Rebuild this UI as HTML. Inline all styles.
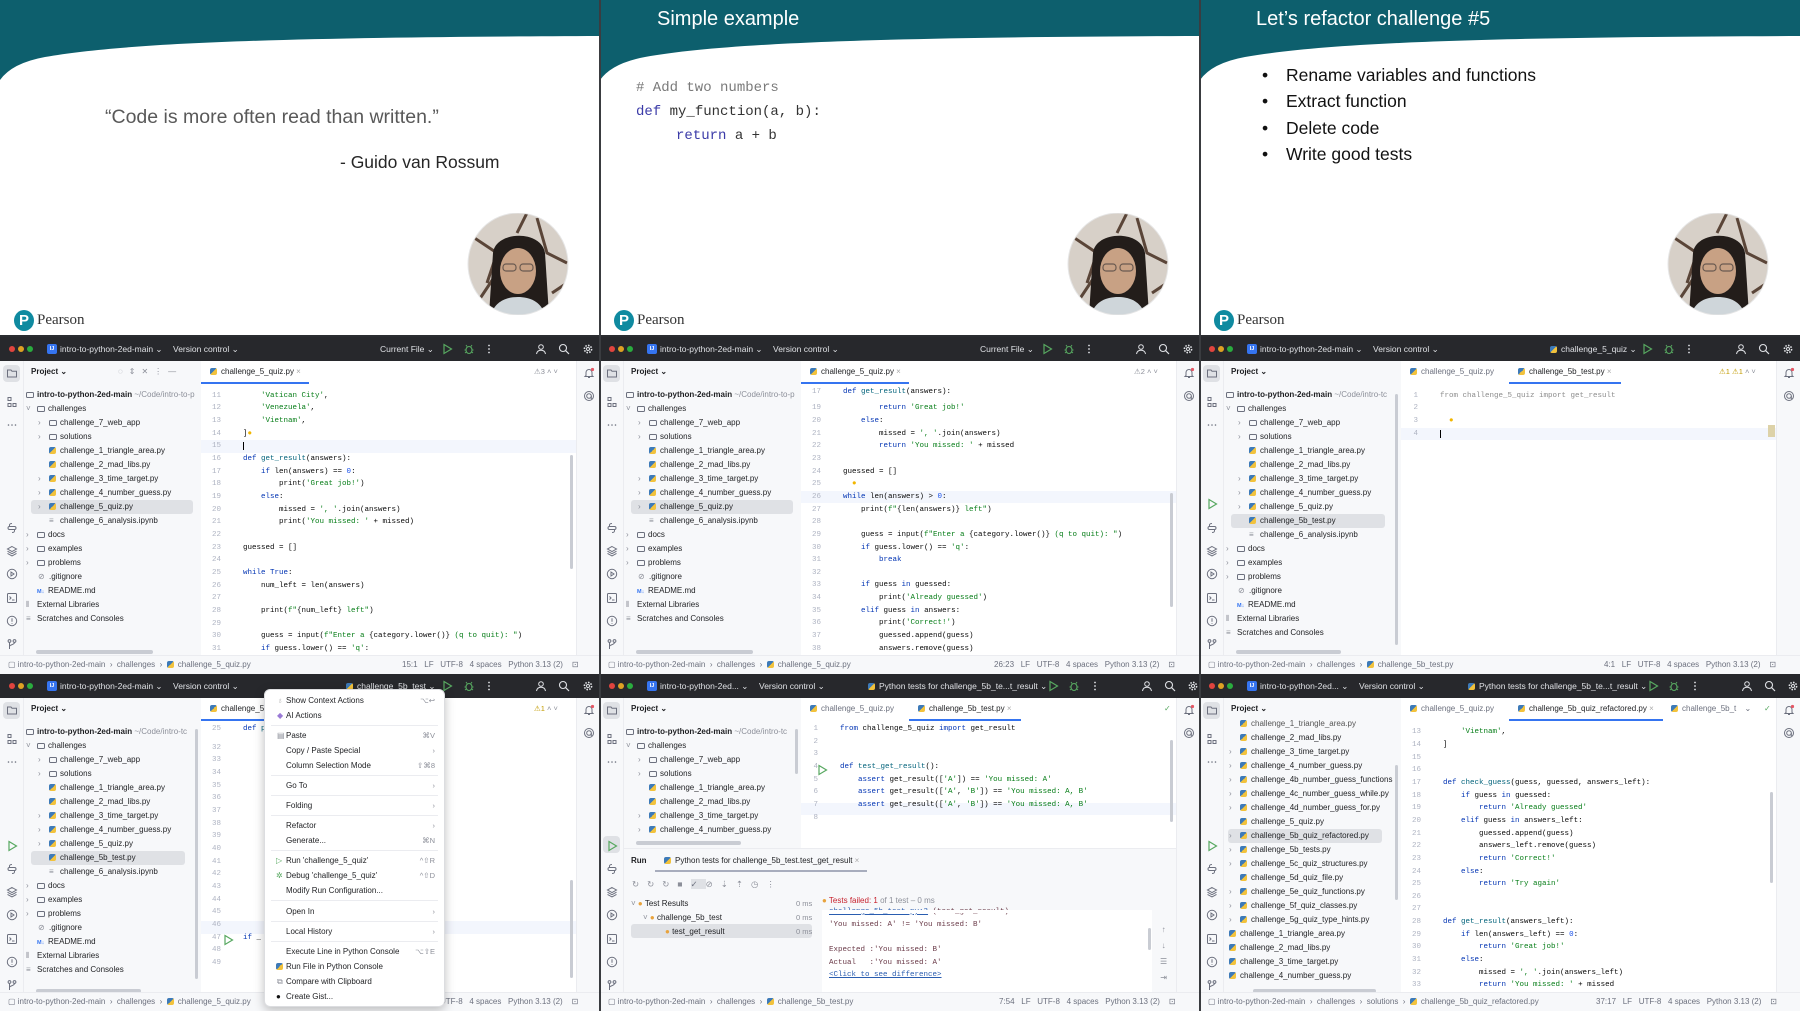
<!DOCTYPE html>
<html><head><meta charset="utf-8"><style>
*{margin:0;padding:0;box-sizing:border-box}
body{width:1800px;height:1011px;overflow:hidden;background:#1e1f22;position:relative;font-family:"Liberation Sans",sans-serif}
.cell{position:absolute;width:600px;height:337px;overflow:hidden;background:#f7f8fa}
.slide{background:#fff}
.a{position:absolute;white-space:nowrap}
.tb{position:absolute;left:0;top:0;width:600px;height:24px;background:#27282c}
.tt{color:#dfe1e5;font-size:8.5px;top:7px;line-height:10px}
.dot{position:absolute;top:9px;width:6px;height:6px;border-radius:50%}
.ij{position:absolute;left:47px;top:7px;width:10px;height:10px;background:#3574f0;border-radius:2px;color:#fff;font-size:5.5px;line-height:10px;text-align:center;font-weight:bold}
.ic{position:absolute;width:12px;height:12px}
.ed{position:absolute;left:201px;top:24px;width:375px;height:294px;background:#fff}
.tree{position:absolute;left:0;top:51px;font-size:8px;color:#1e1f22}
.tree div{height:14px;line-height:14px;white-space:nowrap}
.ch{display:inline-block;width:11px;color:#8c8f99;font-size:8px}
.fo{display:inline-block;width:8px;height:6px;border:1px solid #6c707e;border-radius:1.5px;margin-right:3px;vertical-align:-0.5px}
.py{display:inline-block;width:7px;height:7px;border-radius:2px;background:linear-gradient(135deg,#3d7ab8 50%,#f2c23c 50%);margin-right:4px;vertical-align:-0.5px}
.nb{display:inline-block;width:11px;color:#8c8f99}
.md{display:inline-block;width:11px;color:#3574f0;font-size:5.5px;font-weight:bold}
.sel{position:absolute;left:31px;height:14px;background:#dfe1e5;border-radius:3px}
.code{position:absolute;left:201px;font:7.5px "Liberation Mono",monospace;color:#080808}
.code div{height:12.67px;line-height:12.67px;white-space:pre}
.code b{font-weight:normal;display:inline-block;width:20px;text-align:right;margin-right:22px;color:#aeb3c2}
.k{color:#0033b3}.f{color:#00627a}.s{color:#067d17}.n{color:#1750eb}.g{color:#8c8c8c}
.cur{position:absolute;left:201px;width:375px;height:12.67px;background:#f3f6fd}
.st{position:absolute;left:0;top:318px;width:600px;height:19px;border-top:1px solid #ebecf0;background:#f7f8fa;font-size:8px;color:#6c707e;line-height:18px}
.ph{position:absolute;left:31px;top:30px;font-size:8px;font-weight:bold;color:#1e1f22}
.tab{position:absolute;top:30px;font-size:8px;color:#1e1f22;white-space:nowrap}
.ul{position:absolute;top:45px;height:2px;background:#3574f0}
.vs{position:absolute;width:3px;background:#c9ccd3;border-radius:2px}
.hs{position:absolute;height:4px;background:#c9ccd3;border-radius:2px}
.lst{position:absolute;left:0;top:24px;width:24px;height:294px;border-right:1px solid #ebecf0}
.rst{position:absolute;left:576px;top:24px;width:24px;height:294px;border-left:1px solid #ebecf0}
.menu{position:absolute;left:264px;top:15px;width:181px;height:318px;background:#fff;border:1px solid #dcdde0;border-radius:6px;box-shadow:0 3px 10px rgba(0,0,0,.25);font-size:8px;color:#1e1f22}
.menu div{position:absolute;left:21px;white-space:nowrap;line-height:10px}
.menu i{position:absolute;right:9px;font-style:normal;color:#8c8f99;white-space:nowrap;line-height:10px;font-size:7.5px}
.menu hr{position:absolute;left:6px;right:6px;border:0;border-top:1px solid #ebecf0}
.con{font:7.5px "Liberation Mono",monospace;color:#6a3a48}
</style></head><body>
<svg width="0" height="0" style="position:absolute">
<defs>
<symbol id="play" viewBox="0 0 12 12"><path d="M3 1.5L10.5 6L3 10.5Z" fill="none" stroke="#57a860" stroke-width="1.2"/></symbol>
<symbol id="bug" viewBox="0 0 12 12"><ellipse cx="6" cy="7" rx="3" ry="3.5" fill="none" stroke="#57a860" stroke-width="1.1"/><path d="M4 3.5L3 2M8 3.5L9 2M1.5 7H3M9 7H10.5M2 10L3.3 9M10 10L8.7 9" stroke="#57a860" stroke-width="1"/></symbol>
<symbol id="more" viewBox="0 0 12 12"><circle cx="6" cy="2.5" r="0.9" fill="#dfe1e5"/><circle cx="6" cy="6" r="0.9" fill="#dfe1e5"/><circle cx="6" cy="9.5" r="0.9" fill="#dfe1e5"/></symbol>
<symbol id="user" viewBox="0 0 12 12"><circle cx="6" cy="4" r="2.3" fill="none" stroke="#dfe1e5"/><path d="M1.5 11C2 8 4 7.3 6 7.3S10 8 10.5 11" fill="none" stroke="#dfe1e5"/></symbol>
<symbol id="srch" viewBox="0 0 12 12"><circle cx="5" cy="5" r="3.5" fill="none" stroke="#dfe1e5" stroke-width="1.1"/><path d="M7.6 7.6L11 11" stroke="#dfe1e5" stroke-width="1.2"/></symbol>
<symbol id="gear" viewBox="0 0 12 12"><circle cx="6" cy="6" r="3.6" fill="none" stroke="#dfe1e5" stroke-width="1.6" stroke-dasharray="1.6 1.2"/><circle cx="6" cy="6" r="1.5" fill="none" stroke="#dfe1e5"/></symbol>
<symbol id="fold" viewBox="0 0 12 12"><path d="M1.5 3H5L6 4.2H10.5V10H1.5Z" fill="none" stroke="#6c707e"/></symbol>
<symbol id="strc" viewBox="0 0 12 12"><rect x="2" y="1.5" width="3" height="3" fill="none" stroke="#6c707e"/><rect x="2" y="7.5" width="3" height="3" fill="none" stroke="#6c707e"/><rect x="7" y="7.5" width="3" height="3" fill="none" stroke="#6c707e"/></symbol>
<symbol id="dts" viewBox="0 0 12 12"><circle cx="2.5" cy="6" r="0.8" fill="#6c707e"/><circle cx="6" cy="6" r="0.8" fill="#6c707e"/><circle cx="9.5" cy="6" r="0.8" fill="#6c707e"/></symbol>
<symbol id="pyc" viewBox="0 0 12 12"><path d="M6 1.5C3 1.5 3.5 3 3.5 4.5H6.5M6 10.5C9 10.5 8.5 9 8.5 7.5H5.5M3.5 4.5C1.5 4.5 1.5 7.5 3.5 7.5H5.5M8.5 7.5C10.5 7.5 10.5 4.5 8.5 4.5H6.5" fill="none" stroke="#6c707e"/></symbol>
<symbol id="lay" viewBox="0 0 12 12"><path d="M6 1.5L10.5 4L6 6.5L1.5 4Z M1.5 6.2L6 8.7L10.5 6.2M1.5 8.4L6 10.9L10.5 8.4" fill="none" stroke="#6c707e"/></symbol>
<symbol id="runc" viewBox="0 0 12 12"><circle cx="6" cy="6" r="4.7" fill="none" stroke="#6c707e"/><path d="M5 4L8 6L5 8Z" fill="none" stroke="#6c707e"/></symbol>
<symbol id="term" viewBox="0 0 12 12"><rect x="1.5" y="1.5" width="9" height="9" rx="1" fill="none" stroke="#6c707e"/><path d="M3.5 4.5L5 6L3.5 7.5M6 8H8.5" fill="none" stroke="#6c707e"/></symbol>
<symbol id="prob" viewBox="0 0 12 12"><circle cx="6" cy="6" r="4.7" fill="none" stroke="#6c707e"/><path d="M6 3.3V6.7M6 8V8.8" stroke="#6c707e"/></symbol>
<symbol id="git" viewBox="0 0 12 12"><circle cx="3.5" cy="3" r="1.4" fill="none" stroke="#6c707e"/><circle cx="8.5" cy="3" r="1.4" fill="none" stroke="#6c707e"/><path d="M3.5 4.4V11M8.5 4.4C8.5 7 3.5 6.5 3.5 8.5" fill="none" stroke="#6c707e"/></symbol>
<symbol id="bell" viewBox="0 0 12 12"><path d="M3 8.5V5.5A3 3 0 0 1 9 5.5V8.5L10 9.5H2Z M5 10.5H7" fill="none" stroke="#6c707e"/><circle cx="9.5" cy="2.5" r="1.6" fill="#e55765"/></symbol>
<symbol id="ai" viewBox="0 0 12 12"><circle cx="6" cy="6" r="4.5" fill="none" stroke="#6c707e"/><circle cx="6" cy="6" r="2.3" fill="none" stroke="#6c707e"/><path d="M8.3 6V9" stroke="#6c707e"/></symbol>
<symbol id="av" viewBox="0 0 102 102"><clipPath id="cp"><ellipse cx="51" cy="51" rx="50" ry="51"/></clipPath><g clip-path="url(#cp)"><rect width="102" height="102" fill="#d7d0c8"/><path d="M0 20L30 40L20 70M70 5L80 40L100 50M10 90L30 60M85 80L100 70M60 0L50 20" stroke="#5a4538" stroke-width="3" fill="none"/><path d="M22 102L26 40C28 18 74 16 78 40L82 102Z" fill="#231d1a"/><ellipse cx="51" cy="58" rx="18" ry="23" fill="#c8a184"/><path d="M33 42C36 28 66 26 70 42L66 40C60 32 42 32 36 42Z" fill="#231d1a"/><rect x="36" y="51" width="13" height="7" rx="3" fill="none" stroke="#6a5a50" stroke-width="1.2"/><rect x="53" y="51" width="13" height="7" rx="3" fill="none" stroke="#6a5a50" stroke-width="1.2"/><path d="M24 102C28 88 40 84 51 84S74 88 78 102Z" fill="#cfd6da"/></g><ellipse cx="51" cy="51" rx="50" ry="51" fill="none" stroke="#e6e6e6" stroke-width="1"/></symbol>
<symbol id="band" viewBox="0 0 600 80" preserveAspectRatio="none"><path d="M0 0H600V36C300 37 130 42 45 57Q12 63 0 80Z" fill="#0d5f6d"/></symbol>
</defs></svg>

<!-- ===== ROW 1 SLIDES ===== -->
<div class="cell slide" style="left:0;top:0">
<svg class="a" style="left:0;top:0" width="600" height="80"><use href="#band"/></svg>
<div class="a" style="left:105px;top:106px;font-size:19.5px;color:#595959">“Code is more often read than written.”</div>
<div class="a" style="left:340px;top:152px;font-size:17.5px;color:#262626">- Guido van Rossum</div>
<svg class="a" style="left:467px;top:213px" width="102" height="102"><use href="#av"/></svg>
<div class="a" style="left:14px;top:310px;width:20px;height:21px;border-radius:50%;background:#0f8aa0;color:#fff;font:bold 15px 'Liberation Sans';text-align:center;line-height:21px">P</div>
<div class="a" style="left:37px;top:312px;font:15px 'Liberation Serif',serif;color:#333">Pearson</div>
<div class="a" style="left:0;top:335px;width:600px;height:2px;background:#2a2c30"></div>
</div>
<div class="cell slide" style="left:600px;top:0">
<svg class="a" style="left:0;top:0" width="600" height="80"><use href="#band"/></svg>
<div class="a" style="left:57px;top:8px;font-size:20px;color:#fff">Simple example</div>
<div class="a" style="left:36px;top:80px;font:14px 'Liberation Mono',monospace;color:#7a7a7a">#&nbsp;Add two numbers</div>
<div class="a" style="left:36px;top:104px;font:14px 'Liberation Mono',monospace;color:#333"><span style="color:#3b3ba8">def</span> my_function(a, b):</div>
<div class="a" style="left:76px;top:128px;font:14px 'Liberation Mono',monospace;color:#333"><span style="color:#3b3ba8">return</span> a + b</div>
<svg class="a" style="left:467px;top:213px" width="102" height="102"><use href="#av"/></svg>
<div class="a" style="left:14px;top:310px;width:20px;height:21px;border-radius:50%;background:#0f8aa0;color:#fff;font:bold 15px 'Liberation Sans';text-align:center;line-height:21px">P</div>
<div class="a" style="left:37px;top:312px;font:15px 'Liberation Serif',serif;color:#333">Pearson</div>
<div class="a" style="left:0;top:335px;width:600px;height:2px;background:#2a2c30"></div>
</div>
<div class="cell slide" style="left:1200px;top:0">
<svg class="a" style="left:0;top:0" width="600" height="80"><use href="#band"/></svg>
<div class="a" style="left:56px;top:8px;font-size:20px;color:#fff">Let’s refactor challenge #5</div>
<div class="a" style="left:62px;top:62px;font-size:17.5px;color:#111;line-height:26.3px">•<br>•<br>•<br>•</div>
<div class="a" style="left:86px;top:62px;font-size:17.5px;color:#111;line-height:26.3px">Rename variables and functions<br>Extract function<br>Delete code<br>Write good tests</div>
<svg class="a" style="left:467px;top:213px" width="102" height="102"><use href="#av"/></svg>
<div class="a" style="left:14px;top:310px;width:20px;height:21px;border-radius:50%;background:#0f8aa0;color:#fff;font:bold 15px 'Liberation Sans';text-align:center;line-height:21px">P</div>
<div class="a" style="left:37px;top:312px;font:15px 'Liberation Serif',serif;color:#333">Pearson</div>
<div class="a" style="left:0;top:335px;width:600px;height:2px;background:#2a2c30"></div>
</div>

<!-- ===== ROW 2, COL 1 ===== -->
<div class="cell" style="left:0;top:337px">
<div class="tb"><div class="dot" style="left:9px;background:#e0443e"></div><div class="dot" style="left:18px;background:#dea123"></div><div class="dot" style="left:27px;background:#2aac3e"></div><div class="ij">IJ</div>
<div class="a tt" style="left:60px">intro-to-python-2ed-main ⌄</div><div class="a tt" style="left:173px">Version control ⌄</div><div class="a tt" style="left:380px">Current File ⌄</div>
<svg class="ic" style="left:441px;top:6px"><use href="#play"/></svg><svg class="ic" style="left:463px;top:6px"><use href="#bug"/></svg><svg class="ic" style="left:483px;top:6px"><use href="#more"/></svg><svg class="ic" style="left:535px;top:6px"><use href="#user"/></svg><svg class="ic" style="left:558px;top:6px"><use href="#srch"/></svg><svg class="ic" style="left:582px;top:6px"><use href="#gear"/></svg></div>
<div class="lst"><div class="a" style="left:3px;top:4px;width:17px;height:17px;background:#dfe1e5;border-radius:4px"></div><svg class="ic" style="left:6px;top:6px"><use href="#fold"/></svg><svg class="ic" style="left:6px;top:35px"><use href="#strc"/></svg><svg class="ic" style="left:6px;top:58px"><use href="#dts"/></svg><svg class="ic" style="left:6px;top:161px"><use href="#pyc"/></svg><svg class="ic" style="left:6px;top:184px"><use href="#lay"/></svg><svg class="ic" style="left:6px;top:207px"><use href="#runc"/></svg><svg class="ic" style="left:6px;top:231px"><use href="#term"/></svg><svg class="ic" style="left:6px;top:254px"><use href="#prob"/></svg><svg class="ic" style="left:6px;top:277px"><use href="#git"/></svg></div>
<div class="rst"><svg class="ic" style="left:6px;top:6px"><use href="#bell"/></svg><svg class="ic" style="left:6px;top:29px"><use href="#ai"/></svg></div>
<div class="ph">Project ⌄</div><div class="a" style="left:118px;top:30px;font-size:8px;color:#8c8f99;letter-spacing:6px">◌⇕✕⋮—</div>
<div class="ed"></div>
<div class="tab" style="left:210px"><i class="py"></i>challenge_5_quiz.py <span style="color:#aaa">×</span></div><div class="ul" style="left:201px;width:108px"></div>
<div class="a" style="left:534px;top:30px;font-size:7.5px;color:#8c8f99">⚠3 ˄ ˅</div>
<div class="sel" style="top:163px;width:162px"></div>
<div class="tree">
<div style="padding-left:26px"><i class="fo"></i><b>intro-to-python-2ed-main</b> <span style="color:#8c8f99">~/Code/intro-to-p</span></div>
<div style="padding-left:26px"><span class="ch">˅</span><i class="fo"></i>challenges</div>
<div style="padding-left:38px"><span class="ch">›</span><i class="fo"></i>challenge_7_web_app</div>
<div style="padding-left:38px"><span class="ch">›</span><i class="fo"></i>solutions</div>
<div style="padding-left:49px"><i class="py"></i>challenge_1_triangle_area.py</div>
<div style="padding-left:49px"><i class="py"></i>challenge_2_mad_libs.py</div>
<div style="padding-left:38px"><span class="ch">›</span><i class="py"></i>challenge_3_time_target.py</div>
<div style="padding-left:38px"><span class="ch">›</span><i class="py"></i>challenge_4_number_guess.py</div>
<div style="padding-left:38px"><span class="ch">›</span><i class="py"></i>challenge_5_quiz.py</div>
<div style="padding-left:49px"><span class="nb">≡</span>challenge_6_analysis.ipynb</div>
<div style="padding-left:26px"><span class="ch">›</span><i class="fo"></i>docs</div>
<div style="padding-left:26px"><span class="ch">›</span><i class="fo"></i>examples</div>
<div style="padding-left:26px"><span class="ch">›</span><i class="fo"></i>problems</div>
<div style="padding-left:38px"><span class="nb">⊘</span>.gitignore</div>
<div style="padding-left:37px"><span class="md">M↓</span>README.md</div>
<div style="padding-left:26px"><span class="nb">⫴</span>External Libraries</div>
<div style="padding-left:26px"><span class="nb">≡</span>Scratches and Consoles</div>
</div>
<div class="hs" style="left:36px;top:313px;width:117px"></div>
<div class="cur" style="top:103px"></div>
<div class="code" style="top:52.7px">
<div><b>11</b>    <span class="s">'Vatican City'</span>,</div>
<div><b>12</b>    <span class="s">'Venezuela'</span>,</div>
<div><b>13</b>    <span class="s">'Vietnam'</span>,</div>
<div><b>14</b>]<span style="color:#f2b600">●</span></div>
<div><b>15</b><span style="border-left:1px solid #000"></span></div>
<div><b>16</b><span class="k">def</span> <span class="f">get_result</span>(answers):</div>
<div><b>17</b>    <span class="k">if</span> len(answers) == <span class="n">0</span>:</div>
<div><b>18</b>        print(<span class="s">'Great job!'</span>)</div>
<div><b>19</b>    <span class="k">else</span>:</div>
<div><b>20</b>        missed = <span class="s">', '</span>.join(answers)</div>
<div><b>21</b>        print(<span class="s">'You missed: '</span> + missed)</div>
<div><b>22</b></div>
<div><b>23</b>guessed = []</div>
<div><b>24</b></div>
<div><b>25</b><span class="k">while True</span>:</div>
<div><b>26</b>    num_left = len(answers)</div>
<div><b>27</b></div>
<div><b>28</b>    print(<span class="s">f"</span>{num_left}<span class="s"> left"</span>)</div>
<div><b>29</b></div>
<div><b>30</b>    guess = input(<span class="s">f"Enter a </span>{category.lower()}<span class="s"> (q to quit): "</span>)</div>
<div><b>31</b>    <span class="k">if</span> guess.lower() == <span class="s">'q'</span>:</div>
</div>
<div class="vs" style="left:570px;top:118px;height:114px"></div>
<div class="st"><span class="a" style="left:8px">▢ intro-to-python-2ed-main &nbsp;›&nbsp; challenges &nbsp;›&nbsp; <i class="py"></i>challenge_5_quiz.py</span><span class="a" style="left:402px">15:1 &nbsp;&nbsp;LF &nbsp;&nbsp;UTF-8 &nbsp;&nbsp;4 spaces &nbsp;&nbsp;Python 3.13 (2) &nbsp;&nbsp;&nbsp;⊡</span></div>
</div>

<!-- ===== ROW 2, COL 2 ===== -->
<div class="cell" style="left:600px;top:337px">
<div class="tb"><div class="dot" style="left:9px;background:#e0443e"></div><div class="dot" style="left:18px;background:#dea123"></div><div class="dot" style="left:27px;background:#2aac3e"></div><div class="ij">IJ</div>
<div class="a tt" style="left:60px">intro-to-python-2ed-main ⌄</div><div class="a tt" style="left:173px">Version control ⌄</div><div class="a tt" style="left:380px">Current File ⌄</div>
<svg class="ic" style="left:441px;top:6px"><use href="#play"/></svg><svg class="ic" style="left:463px;top:6px"><use href="#bug"/></svg><svg class="ic" style="left:483px;top:6px"><use href="#more"/></svg><svg class="ic" style="left:535px;top:6px"><use href="#user"/></svg><svg class="ic" style="left:558px;top:6px"><use href="#srch"/></svg><svg class="ic" style="left:582px;top:6px"><use href="#gear"/></svg></div>
<div class="lst"><div class="a" style="left:3px;top:4px;width:17px;height:17px;background:#dfe1e5;border-radius:4px"></div><svg class="ic" style="left:6px;top:6px"><use href="#fold"/></svg><svg class="ic" style="left:6px;top:35px"><use href="#strc"/></svg><svg class="ic" style="left:6px;top:58px"><use href="#dts"/></svg><svg class="ic" style="left:6px;top:161px"><use href="#pyc"/></svg><svg class="ic" style="left:6px;top:184px"><use href="#lay"/></svg><svg class="ic" style="left:6px;top:207px"><use href="#runc"/></svg><svg class="ic" style="left:6px;top:231px"><use href="#term"/></svg><svg class="ic" style="left:6px;top:254px"><use href="#prob"/></svg><svg class="ic" style="left:6px;top:277px"><use href="#git"/></svg></div>
<div class="rst"><svg class="ic" style="left:6px;top:6px"><use href="#bell"/></svg><svg class="ic" style="left:6px;top:29px"><use href="#ai"/></svg></div>
<div class="ph">Project ⌄</div>
<div class="ed"></div>
<div class="tab" style="left:210px"><i class="py"></i>challenge_5_quiz.py <span style="color:#aaa">×</span></div><div class="ul" style="left:201px;width:108px"></div>
<div class="a" style="left:534px;top:30px;font-size:7.5px;color:#8c8f99">⚠2 ˄ ˅</div>
<div class="sel" style="top:163px;width:162px"></div>
<div class="tree">
<div style="padding-left:26px"><i class="fo"></i><b>intro-to-python-2ed-main</b> <span style="color:#8c8f99">~/Code/intro-to-p</span></div>
<div style="padding-left:26px"><span class="ch">˅</span><i class="fo"></i>challenges</div>
<div style="padding-left:38px"><span class="ch">›</span><i class="fo"></i>challenge_7_web_app</div>
<div style="padding-left:38px"><span class="ch">›</span><i class="fo"></i>solutions</div>
<div style="padding-left:49px"><i class="py"></i>challenge_1_triangle_area.py</div>
<div style="padding-left:49px"><i class="py"></i>challenge_2_mad_libs.py</div>
<div style="padding-left:38px"><span class="ch">›</span><i class="py"></i>challenge_3_time_target.py</div>
<div style="padding-left:38px"><span class="ch">›</span><i class="py"></i>challenge_4_number_guess.py</div>
<div style="padding-left:38px"><span class="ch">›</span><i class="py"></i>challenge_5_quiz.py</div>
<div style="padding-left:49px"><span class="nb">≡</span>challenge_6_analysis.ipynb</div>
<div style="padding-left:26px"><span class="ch">›</span><i class="fo"></i>docs</div>
<div style="padding-left:26px"><span class="ch">›</span><i class="fo"></i>examples</div>
<div style="padding-left:26px"><span class="ch">›</span><i class="fo"></i>problems</div>
<div style="padding-left:38px"><span class="nb">⊘</span>.gitignore</div>
<div style="padding-left:37px"><span class="md">M↓</span>README.md</div>
<div style="padding-left:26px"><span class="nb">⫴</span>External Libraries</div>
<div style="padding-left:26px"><span class="nb">≡</span>Scratches and Consoles</div>
</div>
<div class="hs" style="left:36px;top:313px;width:117px"></div>
<div class="cur" style="top:153.5px"></div>
<div class="code" style="top:49px"><div><b>17</b><span class="k">def</span> <span class="f">get_result</span>(answers):</div></div>
<div class="code" style="top:65.3px">
<div><b>19</b>        <span class="k">return</span> <span class="s">'Great job!'</span></div>
<div><b>20</b>    <span class="k">else</span>:</div>
<div><b>21</b>        missed = <span class="s">', '</span>.join(answers)</div>
<div><b>22</b>        <span class="k">return</span> <span class="s">'You missed: '</span> + missed</div>
<div><b>23</b></div>
<div><b>24</b>guessed = []</div>
<div><b>25</b>  <span style="color:#f2b600">●</span></div>
<div><b>26</b><span class="k">while</span> len(answers) &gt; <span class="n">0</span>:</div>
<div><b>27</b>    print(<span class="s">f"</span>{len(answers)}<span class="s"> left"</span>)</div>
<div><b>28</b></div>
<div><b>29</b>    guess = input(<span class="s">f"Enter a </span>{category.lower()}<span class="s"> (q to quit): "</span>)</div>
<div><b>30</b>    <span class="k">if</span> guess.lower() == <span class="s">'q'</span>:</div>
<div><b>31</b>        <span class="k">break</span></div>
<div><b>32</b></div>
<div><b>33</b>    <span class="k">if</span> guess <span class="k">in</span> guessed:</div>
<div><b>34</b>        print(<span class="s">'Already guessed'</span>)</div>
<div><b>35</b>    <span class="k">elif</span> guess <span class="k">in</span> answers:</div>
<div><b>36</b>        print(<span class="s">'Correct!'</span>)</div>
<div><b>37</b>        guessed.append(guess)</div>
<div><b>38</b>        answers.remove(guess)</div>
</div>
<div class="vs" style="left:570px;top:156px;height:114px"></div>
<div class="st"><span class="a" style="left:8px">▢ intro-to-python-2ed-main &nbsp;›&nbsp; challenges &nbsp;›&nbsp; <i class="py"></i>challenge_5_quiz.py</span><span class="a" style="left:394px">26:23 &nbsp;&nbsp;LF &nbsp;&nbsp;UTF-8 &nbsp;&nbsp;4 spaces &nbsp;&nbsp;Python 3.13 (2) &nbsp;&nbsp;&nbsp;⊡</span></div>
</div>

<!-- ===== ROW 2, COL 3 ===== -->
<div class="cell" style="left:1200px;top:337px">
<div class="tb"><div class="dot" style="left:9px;background:#e0443e"></div><div class="dot" style="left:18px;background:#dea123"></div><div class="dot" style="left:27px;background:#2aac3e"></div><div class="ij">IJ</div>
<div class="a tt" style="left:60px">intro-to-python-2ed-main ⌄</div><div class="a tt" style="left:173px">Version control ⌄</div><div class="a tt" style="left:350px"><i class="py"></i>challenge_5_quiz ⌄</div>
<svg class="ic" style="left:441px;top:6px"><use href="#play"/></svg><svg class="ic" style="left:463px;top:6px"><use href="#bug"/></svg><svg class="ic" style="left:483px;top:6px"><use href="#more"/></svg><svg class="ic" style="left:535px;top:6px"><use href="#user"/></svg><svg class="ic" style="left:558px;top:6px"><use href="#srch"/></svg><svg class="ic" style="left:582px;top:6px"><use href="#gear"/></svg></div>
<div class="lst"><div class="a" style="left:3px;top:4px;width:17px;height:17px;background:#dfe1e5;border-radius:4px"></div><svg class="ic" style="left:6px;top:6px"><use href="#fold"/></svg><svg class="ic" style="left:6px;top:35px"><use href="#strc"/></svg><svg class="ic" style="left:6px;top:58px"><use href="#dts"/></svg><svg class="ic" style="left:6px;top:137px"><use href="#play"/></svg><svg class="ic" style="left:6px;top:161px"><use href="#pyc"/></svg><svg class="ic" style="left:6px;top:184px"><use href="#lay"/></svg><svg class="ic" style="left:6px;top:207px"><use href="#runc"/></svg><svg class="ic" style="left:6px;top:231px"><use href="#term"/></svg><svg class="ic" style="left:6px;top:254px"><use href="#prob"/></svg><svg class="ic" style="left:6px;top:277px"><use href="#git"/></svg></div>
<div class="rst"><svg class="ic" style="left:6px;top:6px"><use href="#bell"/></svg><svg class="ic" style="left:6px;top:29px"><use href="#ai"/></svg></div>
<div class="ph">Project ⌄</div>
<div class="ed"></div>
<div class="tab" style="left:210px;color:#6c707e"><i class="py"></i>challenge_5_quiz.py</div>
<div class="tab" style="left:318px"><i class="py"></i>challenge_5b_test.py <span style="color:#aaa">×</span></div><div class="ul" style="left:309px;width:112px"></div>
<div class="a" style="left:519px;top:30px;font-size:7.5px;color:#c29b00">⚠1 ⚠1 <span style="color:#8c8f99">˄ ˅</span></div>
<div class="sel" style="top:177px;width:154px"></div>
<div class="tree">
<div style="padding-left:26px"><i class="fo"></i><b>intro-to-python-2ed-main</b> <span style="color:#8c8f99">~/Code/intro-tc</span></div>
<div style="padding-left:26px"><span class="ch">˅</span><i class="fo"></i>challenges</div>
<div style="padding-left:38px"><span class="ch">›</span><i class="fo"></i>challenge_7_web_app</div>
<div style="padding-left:38px"><span class="ch">›</span><i class="fo"></i>solutions</div>
<div style="padding-left:49px"><i class="py"></i>challenge_1_triangle_area.py</div>
<div style="padding-left:49px"><i class="py"></i>challenge_2_mad_libs.py</div>
<div style="padding-left:38px"><span class="ch">›</span><i class="py"></i>challenge_3_time_target.py</div>
<div style="padding-left:38px"><span class="ch">›</span><i class="py"></i>challenge_4_number_guess.py</div>
<div style="padding-left:38px"><span class="ch">›</span><i class="py"></i>challenge_5_quiz.py</div>
<div style="padding-left:49px"><i class="py"></i>challenge_5b_test.py</div>
<div style="padding-left:49px"><span class="nb">≡</span>challenge_6_analysis.ipynb</div>
<div style="padding-left:26px"><span class="ch">›</span><i class="fo"></i>docs</div>
<div style="padding-left:26px"><span class="ch">›</span><i class="fo"></i>examples</div>
<div style="padding-left:26px"><span class="ch">›</span><i class="fo"></i>problems</div>
<div style="padding-left:38px"><span class="nb">⊘</span>.gitignore</div>
<div style="padding-left:37px"><span class="md">M↓</span>README.md</div>
<div style="padding-left:26px"><span class="nb">⫴</span>External Libraries</div>
<div style="padding-left:26px"><span class="nb">≡</span>Scratches and Consoles</div>
</div>
<div class="vs" style="left:195px;top:57px;height:251px"></div>
<div class="hs" style="left:36px;top:313px;width:105px"></div>
<div class="cur" style="top:90.7px"></div>
<div class="code" style="top:52.7px;left:198px">
<div><b>1</b><span class="g">from challenge_5_quiz import get_result</span></div>
<div><b>2</b></div>
<div><b>3</b>  <span style="color:#f2b600">●</span></div>
<div><b>4</b><span style="border-left:1px solid #000"></span></div>
</div>
<div class="a" style="left:568px;top:88px;width:7px;height:12px;background:#ddd2a8"></div>
<div class="st"><span class="a" style="left:8px">▢ intro-to-python-2ed-main &nbsp;›&nbsp; challenges &nbsp;›&nbsp; <i class="py"></i>challenge_5b_test.py</span><span class="a" style="left:404px">4:1 &nbsp;&nbsp;LF &nbsp;&nbsp;UTF-8 &nbsp;&nbsp;4 spaces &nbsp;&nbsp;Python 3.13 (2) &nbsp;&nbsp;&nbsp;⊡</span></div>
</div>

<!-- ===== ROW 3, COL 1 ===== -->
<div class="cell" style="left:0;top:674px">
<div class="tb"><div class="dot" style="left:9px;background:#e0443e"></div><div class="dot" style="left:18px;background:#dea123"></div><div class="dot" style="left:27px;background:#2aac3e"></div><div class="ij">IJ</div>
<div class="a tt" style="left:60px">intro-to-python-2ed-main ⌄</div><div class="a tt" style="left:173px">Version control ⌄</div><div class="a tt" style="left:346px"><i class="py"></i>challenge_5b_test ⌄</div>
<svg class="ic" style="left:441px;top:6px"><use href="#play"/></svg><svg class="ic" style="left:463px;top:6px"><use href="#bug"/></svg><svg class="ic" style="left:483px;top:6px"><use href="#more"/></svg><svg class="ic" style="left:535px;top:6px"><use href="#user"/></svg><svg class="ic" style="left:558px;top:6px"><use href="#srch"/></svg><svg class="ic" style="left:582px;top:6px"><use href="#gear"/></svg></div>
<div class="lst"><div class="a" style="left:3px;top:4px;width:17px;height:17px;background:#dfe1e5;border-radius:4px"></div><svg class="ic" style="left:6px;top:6px"><use href="#fold"/></svg><svg class="ic" style="left:6px;top:35px"><use href="#strc"/></svg><svg class="ic" style="left:6px;top:58px"><use href="#dts"/></svg><svg class="ic" style="left:6px;top:142px"><use href="#play"/></svg><svg class="ic" style="left:6px;top:165px"><use href="#pyc"/></svg><svg class="ic" style="left:6px;top:188px"><use href="#lay"/></svg><svg class="ic" style="left:6px;top:211px"><use href="#runc"/></svg><svg class="ic" style="left:6px;top:235px"><use href="#term"/></svg><svg class="ic" style="left:6px;top:258px"><use href="#prob"/></svg><svg class="ic" style="left:6px;top:281px"><use href="#git"/></svg></div>
<div class="rst"><svg class="ic" style="left:6px;top:6px"><use href="#bell"/></svg><svg class="ic" style="left:6px;top:29px"><use href="#ai"/></svg></div>
<div class="ph">Project ⌄</div>
<div class="ed"></div>
<div class="tab" style="left:210px"><i class="py"></i>challenge_5_quiz.py</div><div class="ul" style="left:201px;width:108px"></div>
<div class="a" style="left:534px;top:30px;font-size:7.5px;color:#c29b00">⚠1 <span style="color:#8c8f99">˄ ˅</span></div>
<div class="sel" style="top:177px;width:154px"></div>
<div class="tree">
<div style="padding-left:26px"><i class="fo"></i><b>intro-to-python-2ed-main</b> <span style="color:#8c8f99">~/Code/intro-tc</span></div>
<div style="padding-left:26px"><span class="ch">˅</span><i class="fo"></i>challenges</div>
<div style="padding-left:38px"><span class="ch">›</span><i class="fo"></i>challenge_7_web_app</div>
<div style="padding-left:38px"><span class="ch">›</span><i class="fo"></i>solutions</div>
<div style="padding-left:49px"><i class="py"></i>challenge_1_triangle_area.py</div>
<div style="padding-left:49px"><i class="py"></i>challenge_2_mad_libs.py</div>
<div style="padding-left:38px"><span class="ch">›</span><i class="py"></i>challenge_3_time_target.py</div>
<div style="padding-left:38px"><span class="ch">›</span><i class="py"></i>challenge_4_number_guess.py</div>
<div style="padding-left:38px"><span class="ch">›</span><i class="py"></i>challenge_5_quiz.py</div>
<div style="padding-left:49px"><i class="py"></i>challenge_5b_test.py</div>
<div style="padding-left:49px"><span class="nb">≡</span>challenge_6_analysis.ipynb</div>
<div style="padding-left:26px"><span class="ch">›</span><i class="fo"></i>docs</div>
<div style="padding-left:26px"><span class="ch">›</span><i class="fo"></i>examples</div>
<div style="padding-left:26px"><span class="ch">›</span><i class="fo"></i>problems</div>
<div style="padding-left:38px"><span class="nb">⊘</span>.gitignore</div>
<div style="padding-left:37px"><span class="md">M↓</span>README.md</div>
<div style="padding-left:26px"><span class="nb">⫴</span>External Libraries</div>
<div style="padding-left:26px"><span class="nb">≡</span>Scratches and Consoles</div>
</div>
<div class="vs" style="left:195px;top:55px;height:250px"></div>
<div class="hs" style="left:36px;top:315px;width:105px"></div>
<div class="cur" style="top:247px"></div>
<div class="code" style="top:49px"><div><b>25</b><span class="k">def</span> <span class="f">p</span></div></div>
<div class="code" style="top:67.7px">
<div><b>32</b></div><div><b>33</b></div><div><b>34</b></div><div><b>35</b></div><div><b>36</b></div><div><b>37</b></div><div><b>38</b></div><div><b>39</b></div><div><b>40</b></div><div><b>41</b></div><div><b>42</b></div><div><b>43</b></div>
<div><b>44</b>        p</div><div><b>45</b></div><div><b>46</b></div>
<div><b>47</b><span class="k">if</span> _</div>
<div><b>48</b>        p</div><div><b>49</b></div>
</div>
<svg class="ic" style="left:222px;top:260px"><use href="#play"/></svg>
<div class="vs" style="left:570px;top:206px;height:98px"></div>
<div class="st"><span class="a" style="left:8px">▢ intro-to-python-2ed-main &nbsp;›&nbsp; challenges &nbsp;›&nbsp; <i class="py"></i>challenge_5_quiz.py</span><span class="a" style="left:440px">UTF-8 &nbsp;&nbsp;4 spaces &nbsp;&nbsp;Python 3.13 (2) &nbsp;&nbsp;&nbsp;⊡</span></div>
<div class="menu">
<div style="top:6px"><span style="position:absolute;left:-9px;color:#b0b0b0">♁</span>Show Context Actions</div><i style="top:6px">⌥↩</i>
<div style="top:21px"><span style="position:absolute;left:-9px;color:#9a7ad6">◆</span>AI Actions</div>
<hr style="top:35px">
<div style="top:41px"><span style="position:absolute;left:-9px;color:#8c8f99">▤</span>Paste</div><i style="top:41px">⌘V</i>
<div style="top:56px">Copy / Paste Special</div><i style="top:56px">›</i>
<div style="top:71px">Column Selection Mode</div><i style="top:71px">⇧⌘8</i>
<hr style="top:85px">
<div style="top:91px">Go To</div><i style="top:91px">›</i>
<hr style="top:105px">
<div style="top:111px">Folding</div><i style="top:111px">›</i>
<hr style="top:125px">
<div style="top:131px">Refactor</div><i style="top:131px">›</i>
<div style="top:146px">Generate...</div><i style="top:146px">⌘N</i>
<hr style="top:160px">
<div style="top:166px"><span style="position:absolute;left:-10px;color:#57a860">▷</span>Run 'challenge_5_quiz'</div><i style="top:166px">^⇧R</i>
<div style="top:181px"><span style="position:absolute;left:-10px;color:#57a860">✲</span>Debug 'challenge_5_quiz'</div><i style="top:181px">^⇧D</i>
<div style="top:196px">Modify Run Configuration...</div>
<hr style="top:210px">
<div style="top:217px">Open In</div><i style="top:217px">›</i>
<hr style="top:231px">
<div style="top:237px">Local History</div><i style="top:237px">›</i>
<hr style="top:251px">
<div style="top:257px">Execute Line in Python Console</div><i style="top:257px">⌥⇧E</i>
<div style="top:272px"><i class="py" style="position:absolute;left:-10px;right:auto;top:1px"></i>Run File in Python Console</div>
<div style="top:287px"><span style="position:absolute;left:-9px;color:#8c8f99">⧉</span>Compare with Clipboard</div>
<div style="top:302px"><span style="position:absolute;left:-10px;color:#111">●</span>Create Gist...</div>
</div>
</div>

<!-- ===== ROW 3, COL 2 ===== -->
<div class="cell" style="left:600px;top:674px">
<div class="tb"><div class="dot" style="left:9px;background:#e0443e"></div><div class="dot" style="left:18px;background:#dea123"></div><div class="dot" style="left:27px;background:#2aac3e"></div><div class="ij">IJ</div>
<div class="a tt" style="left:60px">intro-to-python-2ed... ⌄</div><div class="a tt" style="left:159px">Version control ⌄</div><div class="a tt" style="left:268px"><i class="py"></i>Python tests for challenge_5b_te...t_result ⌄</div>
<svg class="ic" style="left:447px;top:6px"><use href="#play"/></svg><svg class="ic" style="left:468px;top:6px"><use href="#bug"/></svg><svg class="ic" style="left:489px;top:6px"><use href="#more"/></svg><svg class="ic" style="left:541px;top:6px"><use href="#user"/></svg><svg class="ic" style="left:564px;top:6px"><use href="#srch"/></svg><svg class="ic" style="left:587px;top:6px"><use href="#gear"/></svg></div>
<div class="lst"><div class="a" style="left:3px;top:4px;width:17px;height:17px;background:#dfe1e5;border-radius:4px"></div><svg class="ic" style="left:6px;top:6px"><use href="#fold"/></svg><svg class="ic" style="left:6px;top:35px"><use href="#strc"/></svg><svg class="ic" style="left:6px;top:58px"><use href="#dts"/></svg><div class="a" style="left:3px;top:138px;width:17px;height:17px;background:#dfe1e5;border-radius:4px"></div><svg class="ic" style="left:6px;top:142px"><use href="#play"/></svg><svg class="ic" style="left:6px;top:165px"><use href="#pyc"/></svg><svg class="ic" style="left:6px;top:188px"><use href="#lay"/></svg><svg class="ic" style="left:6px;top:211px"><use href="#runc"/></svg><svg class="ic" style="left:6px;top:235px"><use href="#term"/></svg><svg class="ic" style="left:6px;top:258px"><use href="#prob"/></svg><svg class="ic" style="left:6px;top:281px"><use href="#git"/></svg></div>
<div class="rst"><svg class="ic" style="left:6px;top:6px"><use href="#bell"/></svg><svg class="ic" style="left:6px;top:29px"><use href="#ai"/></svg></div>
<div class="ph">Project ⌄</div>
<div class="ed" style="height:150px"></div>
<div class="tab" style="left:210px;color:#6c707e"><i class="py"></i>challenge_5_quiz.py</div>
<div class="tab" style="left:318px"><i class="py"></i>challenge_5b_test.py <span style="color:#aaa">×</span></div><div class="ul" style="left:309px;width:112px"></div>
<div class="a" style="left:564px;top:30px;font-size:8px;color:#57a860">✓</div>
<div class="tree">
<div style="padding-left:26px"><i class="fo"></i><b>intro-to-python-2ed-main</b> <span style="color:#8c8f99">~/Code/intro-tc</span></div>
<div style="padding-left:26px"><span class="ch">˅</span><i class="fo"></i>challenges</div>
<div style="padding-left:38px"><span class="ch">›</span><i class="fo"></i>challenge_7_web_app</div>
<div style="padding-left:38px"><span class="ch">›</span><i class="fo"></i>solutions</div>
<div style="padding-left:49px"><i class="py"></i>challenge_1_triangle_area.py</div>
<div style="padding-left:49px"><i class="py"></i>challenge_2_mad_libs.py</div>
<div style="padding-left:38px"><span class="ch">›</span><i class="py"></i>challenge_3_time_target.py</div>
<div style="padding-left:38px"><span class="ch">›</span><i class="py"></i>challenge_4_number_guess.py</div>
</div>
<div class="vs" style="left:195px;top:55px;height:45px"></div>
<div class="hs" style="left:36px;top:167px;width:105px"></div>
<div class="cur" style="top:128.5px"></div>
<div class="code" style="top:49px;left:198px">
<div><b>1</b><span class="k">from</span> challenge_5_quiz <span class="k">import</span> get_result</div>
<div><b>2</b></div><div><b>3</b></div>
<div><b>4</b><span class="k">def</span> <span class="f">test_get_result</span>():</div>
<div><b>5</b>    <span class="k">assert</span> get_result([<span class="s">'A'</span>]) == <span class="s">'You missed: A'</span></div>
<div><b>6</b>    <span class="k">assert</span> get_result([<span class="s">'A'</span>, <span class="s">'B'</span>]) == <span class="s">'You missed: A, B'</span></div>
<div><b>7</b>    <span class="k">assert</span> get_result([<span class="s">'A'</span>, <span class="s">'B'</span>]) == <span class="s">'You missed: A, B'</span></div>
<div><b>8</b></div>
</div>
<svg class="ic" style="left:216px;top:90px"><use href="#play"/></svg>
<div class="vs" style="left:570px;top:66px;height:82px"></div>
<div class="a" style="left:24px;top:174px;width:552px;height:1px;background:#ebecf0"></div>
<div class="a" style="left:31px;top:182px;font-size:8px;font-weight:bold;color:#1e1f22">Run</div>
<div class="a" style="left:64px;top:182px;font-size:8px;color:#1e1f22"><i class="py"></i>Python tests for challenge_5b_test.test_get_result <span style="color:#aaa">×</span></div>
<div class="a" style="left:55px;top:196px;width:212px;height:2px;background:#a8adbd"></div>
<div class="a" style="left:32px;top:205px;font-size:8.5px;color:#8c8f99;letter-spacing:8px">↻↻↻■<span style="background:#dfe1e5;color:#6c707e">✓</span>⊘⇣⇡◷⋮</div>
<div class="sel" style="top:250px;width:181px"></div>
<div class="a" style="left:31px;top:223px;font-size:8px;color:#1e1f22;line-height:14px">
<div><span style="color:#8c8f99">˅</span> <span style="color:#e8a33d">●</span> Test Results</div>
<div style="padding-left:12px"><span style="color:#8c8f99">˅</span> <span style="color:#e8a33d">●</span> challenge_5b_test</div>
<div style="padding-left:34px"><span style="color:#e8a33d">●</span> test_get_result</div></div>
<div class="a" style="left:196px;top:223px;font-size:7.5px;color:#8c8f99;line-height:14px">0 ms<br>0 ms<br>0 ms</div>
<div class="a" style="left:222px;top:222px;font-size:8px;color:#8c8f99"><span style="color:#e8a33d">●</span> <span style="color:#c7222d">Tests failed: 1</span> of 1 test – 0 ms</div>
<div class="a" style="left:222px;top:236px;width:330px;height:82px;background:#fff;overflow:hidden"></div>
<div class="a con" style="left:229px;top:232px;line-height:12.67px;white-space:pre"><span style="color:#2a5db0;text-decoration:underline">challenge_5b_test.py:3</span> (test_get_result)
'You missed: A' != 'You missed: B'

Expected :'You missed: B'
Actual   :'You missed: A'
<span style="color:#2a5db0;text-decoration:underline">&lt;Click to see difference&gt;</span></div>
<div class="a" style="left:222px;top:236px;width:330px;height:3px;background:#fff"></div>
<div class="vs" style="left:548px;top:254px;height:22px"></div>
<div class="a" style="left:560px;top:248px;font-size:8px;color:#8c8f99;line-height:16px;text-align:center">↑<br>↓<br>☰<br>⇥</div>
<div class="st"><span class="a" style="left:8px">▢ intro-to-python-2ed-main &nbsp;›&nbsp; challenges &nbsp;›&nbsp; <i class="py"></i>challenge_5b_test.py</span><span class="a" style="left:399px">7:54 &nbsp;&nbsp;LF &nbsp;&nbsp;UTF-8 &nbsp;&nbsp;4 spaces &nbsp;&nbsp;Python 3.13 (2) &nbsp;&nbsp;&nbsp;⊡</span></div>
</div>

<!-- ===== ROW 3, COL 3 ===== -->
<div class="cell" style="left:1200px;top:674px">
<div class="tb"><div class="dot" style="left:9px;background:#e0443e"></div><div class="dot" style="left:18px;background:#dea123"></div><div class="dot" style="left:27px;background:#2aac3e"></div><div class="ij">IJ</div>
<div class="a tt" style="left:60px">intro-to-python-2ed... ⌄</div><div class="a tt" style="left:159px">Version control ⌄</div><div class="a tt" style="left:268px"><i class="py"></i>Python tests for challenge_5b_te...t_result ⌄</div>
<svg class="ic" style="left:447px;top:6px"><use href="#play"/></svg><svg class="ic" style="left:468px;top:6px"><use href="#bug"/></svg><svg class="ic" style="left:489px;top:6px"><use href="#more"/></svg><svg class="ic" style="left:541px;top:6px"><use href="#user"/></svg><svg class="ic" style="left:564px;top:6px"><use href="#srch"/></svg><svg class="ic" style="left:587px;top:6px"><use href="#gear"/></svg></div>
<div class="lst"><div class="a" style="left:3px;top:4px;width:17px;height:17px;background:#dfe1e5;border-radius:4px"></div><svg class="ic" style="left:6px;top:6px"><use href="#fold"/></svg><svg class="ic" style="left:6px;top:35px"><use href="#strc"/></svg><svg class="ic" style="left:6px;top:58px"><use href="#dts"/></svg><svg class="ic" style="left:6px;top:142px"><use href="#play"/></svg><svg class="ic" style="left:6px;top:165px"><use href="#pyc"/></svg><svg class="ic" style="left:6px;top:188px"><use href="#lay"/></svg><svg class="ic" style="left:6px;top:211px"><use href="#runc"/></svg><svg class="ic" style="left:6px;top:235px"><use href="#term"/></svg><svg class="ic" style="left:6px;top:258px"><use href="#prob"/></svg><svg class="ic" style="left:6px;top:281px"><use href="#git"/></svg></div>
<div class="rst"><svg class="ic" style="left:6px;top:6px"><use href="#bell"/></svg><svg class="ic" style="left:6px;top:29px"><use href="#ai"/></svg></div>
<div class="ed"></div>
<div class="tab" style="left:210px;color:#6c707e"><i class="py"></i>challenge_5_quiz.py</div>
<div class="tab" style="left:318px"><i class="py"></i>challenge_5b_quiz_refactored.py <span style="color:#aaa">×</span></div><div class="ul" style="left:309px;width:154px"></div>
<div class="tab" style="left:471px;color:#6c707e"><i class="py"></i>challenge_5b_t <span style="margin-left:6px">⌄</span></div>
<div class="a" style="left:564px;top:30px;font-size:8px;color:#57a860">✓</div>
<div class="sel" style="top:155px;width:154px;left:28px"></div>
<div class="tree" style="top:43.3px;overflow:hidden;height:273px;width:200px">
<div style="padding-left:40px;color:#555"><i class="py"></i>challenge_1_triangle_area.py</div>
<div style="padding-left:40px"><i class="py"></i>challenge_2_mad_libs.py</div>
<div style="padding-left:29px"><span class="ch">›</span><i class="py"></i>challenge_3_time_target.py</div>
<div style="padding-left:29px"><span class="ch">›</span><i class="py"></i>challenge_4_number_guess.py</div>
<div style="padding-left:29px"><span class="ch">›</span><i class="py"></i>challenge_4b_number_guess_functions</div>
<div style="padding-left:29px"><span class="ch">›</span><i class="py"></i>challenge_4c_number_guess_while.py</div>
<div style="padding-left:29px"><span class="ch">›</span><i class="py"></i>challenge_4d_number_guess_for.py</div>
<div style="padding-left:40px"><i class="py"></i>challenge_5_quiz.py</div>
<div style="padding-left:29px"><span class="ch">›</span><i class="py"></i>challenge_5b_quiz_refactored.py</div>
<div style="padding-left:29px"><span class="ch">›</span><i class="py"></i>challenge_5b_tests.py</div>
<div style="padding-left:29px"><span class="ch">›</span><i class="py"></i>challenge_5c_quiz_structures.py</div>
<div style="padding-left:40px"><i class="py"></i>challenge_5d_quiz_file.py</div>
<div style="padding-left:29px"><span class="ch">›</span><i class="py"></i>challenge_5e_quiz_functions.py</div>
<div style="padding-left:29px"><span class="ch">›</span><i class="py"></i>challenge_5f_quiz_classes.py</div>
<div style="padding-left:29px"><span class="ch">›</span><i class="py"></i>challenge_5g_quiz_type_hints.py</div>
<div style="padding-left:29px"><i class="py"></i>challenge_1_triangle_area.py</div>
<div style="padding-left:29px"><i class="py"></i>challenge_2_mad_libs.py</div>
<div style="padding-left:29px"><i class="py"></i>challenge_3_time_target.py</div>
<div style="padding-left:29px"><i class="py"></i>challenge_4_number_guess.py</div>
</div>
<div class="a" style="left:24px;top:24px;width:177px;height:22px;background:#f7f8fa"></div>
<div class="ph">Project ⌄</div>
<div class="vs" style="left:195px;top:91px;height:135px"></div>
<div class="hs" style="left:53px;top:315px;width:123px"></div>
<div class="code" style="top:52.3px">
<div><b>13</b>    <span class="s">'Vietnam'</span>,</div>
<div><b>14</b>]</div>
<div><b>15</b></div><div><b>16</b></div>
<div><b>17</b><span class="k">def</span> <span class="f">check_guess</span>(guess, guessed, answers_left):</div>
<div><b>18</b>    <span class="k">if</span> guess <span class="k">in</span> guessed:</div>
<div><b>19</b>        <span class="k">return</span> <span class="s">'Already guessed'</span></div>
<div><b>20</b>    <span class="k">elif</span> guess <span class="k">in</span> answers_left:</div>
<div><b>21</b>        guessed.append(guess)</div>
<div><b>22</b>        answers_left.remove(guess)</div>
<div><b>23</b>        <span class="k">return</span> <span class="s">'Correct!'</span></div>
<div><b>24</b>    <span class="k">else</span>:</div>
<div><b>25</b>        <span class="k">return</span> <span class="s">'Try again'</span></div>
<div><b>26</b></div><div><b>27</b></div>
<div><b>28</b><span class="k">def</span> <span class="f">get_result</span>(answers_left):</div>
<div><b>29</b>    <span class="k">if</span> len(answers_left) == <span class="n">0</span>:</div>
<div><b>30</b>        <span class="k">return</span> <span class="s">'Great job!'</span></div>
<div><b>31</b>    <span class="k">else</span>:</div>
<div><b>32</b>        missed = <span class="s">', '</span>.join(answers_left)</div>
<div><b>33</b>        <span class="k">return</span> <span class="s">'You missed: '</span> + missed</div>
</div>
<div class="vs" style="left:570px;top:118px;height:91px"></div>
<div class="st"><span class="a" style="left:8px">▢ intro-to-python-2ed-main &nbsp;›&nbsp; challenges &nbsp;›&nbsp; solutions &nbsp;›&nbsp; <i class="py"></i>challenge_5b_quiz_refactored.py</span><span class="a" style="left:396px">37:17 &nbsp;&nbsp;LF &nbsp;&nbsp;UTF-8 &nbsp;&nbsp;4 spaces &nbsp;&nbsp;Python 3.13 (2) &nbsp;&nbsp;&nbsp;⊡</span></div>
</div>

<div class="a" style="left:599px;top:0;width:2px;height:1011px;background:#3a3c40"></div>
<div class="a" style="left:1199px;top:0;width:2px;height:1011px;background:#3a3c40"></div>
</body></html>
